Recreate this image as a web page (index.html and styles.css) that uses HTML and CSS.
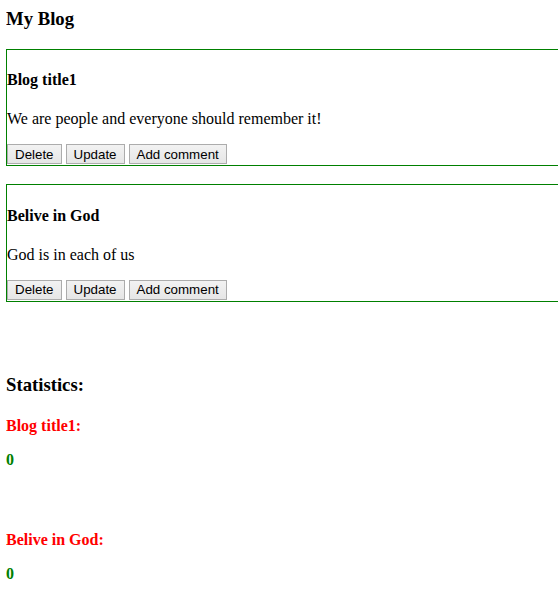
FILE: index.html
```html
<!DOCTYPE html>
<html lang="en">
<head>
<meta charset="utf-8">
<title>My Blog</title>
<link rel="stylesheet" href="styles.css">
</head>
<body>
<div class="app">
  <h3 class="page-title">My Blog</h3>

  <div class="post">
    <h4 class="post-title">Blog title1</h4>
    <p class="post-body">We are people and everyone should remember it!</p>
    <div class="actions">
      <button class="btn">Delete</button>
      <button class="btn">Update</button>
      <button class="btn">Add comment</button>
    </div>
  </div>

  <div class="post">
    <h4 class="post-title">Belive in God</h4>
    <p class="post-body">God is in each of us</p>
    <div class="actions">
      <button class="btn">Delete</button>
      <button class="btn">Update</button>
      <button class="btn">Add comment</button>
    </div>
  </div>

  <div class="stats">
    <h3 class="stats-title">Statistics:</h3>
    <div class="stat">
      <h4 class="stat-name">Blog title1:</h4>
      <p class="stat-count">0</p>
    </div>
    <div class="stat">
      <h4 class="stat-name">Belive in God:</h4>
      <p class="stat-count">0</p>
    </div>
  </div>
</div>
</body>
</html>
```

FILE: styles.css
```css
body {
  margin: 8px 0 0 6px;
  font-family: "Liberation Serif", "Times New Roman", serif;
  font-size: 16px;
  color: #000;
  background: #fff;
}

.page-title {
  font-size: 18.72px;
  font-weight: bold;
  margin: 0 0 18.72px 0;
}

.post {
  border: 1px solid #008000;
  border-right: 0;
  margin: 0 0 18px 0;
}

.post-title {
  font-size: 16px;
  font-weight: bold;
  margin: 21.28px 0;
}

.post-body {
  margin: 16px 0;
}

.actions {
  display: flex;
  gap: 4px;
  padding-bottom: 1px;
}

.btn {
  font-family: "Liberation Sans", Arial, sans-serif;
  font-size: 13.333px;
  color: #000;
  height: 20px;
  padding: 0 7px;
  margin: 0;
  border: 1px solid #acacac;
  border-radius: 0;
  background: linear-gradient(#f2f2f2, #e6e6e6);
}

.stats {
  padding-top: 54px;
}

.stats-title {
  font-size: 18.72px;
  font-weight: bold;
  margin: 0 0 21.28px 0;
}

.stat-name {
  font-size: 16px;
  font-weight: bold;
  color: #ff0000;
  margin: 0 0 16px 0;
}

.stat-count {
  font-weight: bold;
  color: #008000;
  margin: 0 0 62px 0;
}

.stat:last-child .stat-count {
  margin-bottom: 0;
}
```
